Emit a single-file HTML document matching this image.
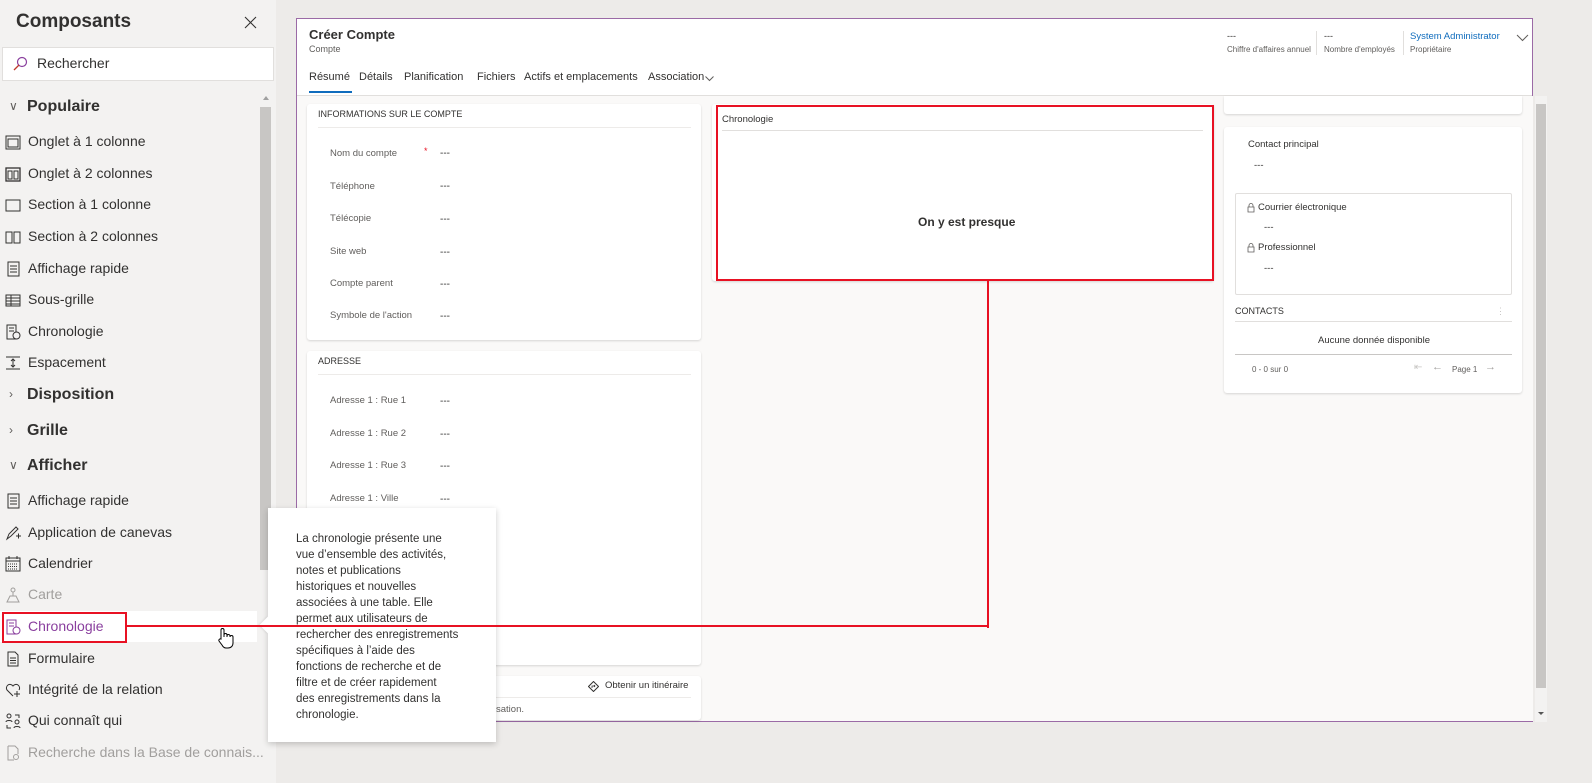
<!DOCTYPE html>
<html><head><meta charset="utf-8">
<style>
*{box-sizing:border-box;margin:0;padding:0}
body{width:1592px;height:783px;overflow:hidden;background:#edebe9;font-family:"Segoe UI","Liberation Sans",sans-serif;color:#323130;position:relative}
.abs{position:absolute;white-space:nowrap}
#side{position:absolute;left:0;top:0;width:276px;height:783px;background:#f3f2f1}
.it{position:absolute;left:28px;font-size:14px;color:#323130;line-height:18px}
.ic{position:absolute;left:5px;width:16px;height:16px}
.hd{position:absolute;left:27px;font-size:16px;font-weight:600;color:#323130;line-height:20px}
.chev{position:absolute;left:9px;font-size:12px;color:#605e5c}
.card{position:absolute;background:#fff;border-radius:3px;box-shadow:0 1px 2px rgba(0,0,0,.15)}
.lbl{position:absolute;font-size:9.5px;color:#605e5c}
.val{position:absolute;font-size:10px;color:#323130}
.tab{position:absolute;top:71px;font-size:11px;color:#323130}
</style></head><body>
<div id="side">
  <div class="abs" style="left:16px;top:11px;font-size:19px;font-weight:600;color:#323130">Composants</div>
  <svg class="abs" style="left:244px;top:16px" width="13" height="13"><path d="M1 1L12 12M12 1L1 12" stroke="#323130" stroke-width="1.1"/></svg>
  <div class="abs" style="left:2px;top:47px;width:272px;height:34px;background:#fff;border:1px solid #e1dfdd"></div>
  <svg class="abs" style="left:12px;top:56px" width="16" height="16"><circle cx="10" cy="6" r="4.5" fill="none" stroke="#8a3f9e" stroke-width="1.2"/><path d="M7 9L2 14" stroke="#c0392b" stroke-width="1.3"/></svg>
  <div class="abs" style="left:37px;top:55px;font-size:14px;color:#323130">Rechercher</div>
  <div class="abs" style="left:259px;top:93px;width:12px;height:480px;background:#f3f2f1"></div>
  <div class="abs" style="left:263px;top:96px;width:0;height:0;border-left:3px solid transparent;border-right:3px solid transparent;border-bottom:4px solid #a0a0a0"></div>
  <div class="abs" style="left:260px;top:107px;width:11px;height:463px;background:#c8c6c4"></div>

  <div class="chev abs" style="top:99px">&#x2228;</div><div class="hd" style="top:97px">Populaire</div>
  <svg class="ic" style="top:134px"><rect x="1" y="2" width="14" height="13" fill="none" stroke="#323130"/><rect x="3" y="5" width="10" height="8" fill="none" stroke="#323130"/></svg><div class="it" style="top:132px">Onglet à 1 colonne</div>
  <svg class="ic" style="top:166px"><rect x="1" y="2" width="14" height="13" fill="none" stroke="#323130" stroke-width="1.3"/><rect x="3" y="5" width="4" height="8" fill="none" stroke="#323130"/><rect x="9" y="5" width="4" height="8" fill="none" stroke="#323130"/></svg><div class="it" style="top:164px">Onglet à 2 colonnes</div>
  <svg class="ic" style="top:197px"><rect x="1" y="3" width="14" height="11" fill="none" stroke="#323130"/></svg><div class="it" style="top:195px">Section à 1 colonne</div>
  <svg class="ic" style="top:229px"><rect x="1" y="3" width="6" height="11" fill="none" stroke="#323130"/><rect x="9" y="3" width="6" height="11" fill="none" stroke="#323130"/></svg><div class="it" style="top:227px">Section à 2 colonnes</div>
  <svg class="ic" style="top:261px"><rect x="3" y="1" width="11" height="14" fill="none" stroke="#323130"/><path d="M5 5h7M5 8h7M5 11h7" stroke="#323130"/></svg><div class="it" style="top:259px">Affichage rapide</div>
  <svg class="ic" style="top:292px"><rect x="1" y="3" width="14" height="11" fill="none" stroke="#323130"/><path d="M1 6h14M1 9h14M1 12h14M6 3v11" stroke="#323130"/></svg><div class="it" style="top:290px">Sous-grille</div>
  <svg class="ic" style="top:324px"><rect x="2" y="1" width="9" height="14" fill="none" stroke="#323130"/><path d="M4 4h5M4 7h5" stroke="#323130"/><circle cx="11.5" cy="11.5" r="3.5" fill="#f3f2f1" stroke="#323130"/></svg><div class="it" style="top:322px">Chronologie</div>
  <svg class="ic" style="top:355px"><path d="M1 2h14M1 14h14M8 4v8M6 6l2-2 2 2M6 10l2 2 2-2" stroke="#323130" fill="none"/></svg><div class="it" style="top:353px">Espacement</div>

  <div class="chev abs" style="top:387px">&#x203A;</div><div class="hd" style="top:385px">Disposition</div>
  <div class="chev abs" style="top:423px">&#x203A;</div><div class="hd" style="top:421px">Grille</div>
  <div class="chev abs" style="top:458px">&#x2228;</div><div class="hd" style="top:456px">Afficher</div>

  <svg class="ic" style="top:493px"><rect x="3" y="1" width="11" height="14" fill="none" stroke="#323130"/><path d="M5 5h7M5 8h7M5 11h7" stroke="#323130"/></svg><div class="it" style="top:491px">Affichage rapide</div>
  <svg class="ic" style="top:525px"><path d="M2 14l2-5 7-7 2 2-7 7z M11 11h5M13.5 8.5v5" stroke="#323130" fill="none"/></svg><div class="it" style="top:523px">Application de canevas</div>
  <svg class="ic" style="top:556px"><rect x="1" y="2" width="14" height="13" fill="none" stroke="#323130"/><path d="M1 5h14M4 0v3M12 0v3" stroke="#323130"/><path d="M3 8h10M3 10.5h10M3 13h10" stroke="#323130" stroke-dasharray="1 1"/></svg><div class="it" style="top:554px">Calendrier</div>
  <svg class="ic" style="top:587px"><circle cx="8" cy="3" r="2" fill="none" stroke="#a19f9d"/><path d="M8 5v4M2 15l3-6h6l3 6z" stroke="#a19f9d" fill="none"/></svg><div class="it" style="top:585px;color:#a19f9d">Carte</div>
  <div class="abs" style="left:0;top:611px;width:257px;height:31px;background:#fff"></div>
  <svg class="ic" style="top:619px"><rect x="2" y="1" width="9" height="14" fill="none" stroke="#8a3f9e"/><path d="M4 4h5M4 7h5" stroke="#8a3f9e"/><circle cx="11.5" cy="11.5" r="3.5" fill="#fff" stroke="#8a3f9e"/></svg><div class="it" style="top:617px;color:#8a3f9e">Chronologie</div>
  <div class="abs" style="left:2px;top:612px;width:125px;height:31px;border:2px solid #e81123"></div>
  <svg class="ic" style="top:651px"><path d="M3 1h7l3 3v11H3z" fill="none" stroke="#323130"/><path d="M5 7h6M5 9.5h6M5 12h6" stroke="#323130"/></svg><div class="it" style="top:649px">Formulaire</div>
  <svg class="ic" style="top:682px"><path d="M8 14L2 8a3.5 3.5 0 016-4 3.5 3.5 0 016 4" fill="none" stroke="#323130"/><path d="M12 9v6M9 12h6" stroke="#323130"/></svg><div class="it" style="top:680px">Intégrité de la relation</div>
  <svg class="ic" style="top:713px"><circle cx="4" cy="3" r="2" fill="none" stroke="#323130"/><circle cx="12" cy="9" r="2" fill="none" stroke="#323130"/><path d="M1 9c0-2 6-2 6 0M9 15c0-2 6-2 6 0M10 2h4v3M2 12v3h4" stroke="#323130" fill="none"/></svg><div class="it" style="top:711px">Qui connaît qui</div>
  <svg class="ic" style="top:745px"><path d="M3 1h7l3 3v5M3 1v14h6" fill="none" stroke="#a19f9d"/><circle cx="11" cy="12" r="2.5" fill="none" stroke="#a19f9d"/></svg><div class="it" style="top:743px;color:#a19f9d">Recherche dans la Base de connais...</div>
</div>

<!-- form frame -->
<div class="abs" style="left:296px;top:18px;width:1237px;height:704px;border:1px solid #9b6aa6;border-right:none;background:#faf9f8"></div>
<div class="abs" style="left:297px;top:19px;width:1235px;height:77px;background:#fff;border-bottom:1px solid #e1dfdd"></div>
<div class="abs" style="left:1532px;top:18px;width:1px;height:78px;background:#9b6aa6"></div>
<div class="abs" style="left:1535px;top:96px;width:12px;height:626px;background:#f3f2f1"></div>
<div class="abs" style="left:1536px;top:104px;width:10px;height:584px;background:#c8c6c4"></div>
<div class="abs" style="left:1538px;top:712px;width:0;height:0;border-left:3px solid transparent;border-right:3px solid transparent;border-top:3px solid #555"></div>

<div class="abs" style="left:309px;top:27px;font-size:13px;font-weight:600">Créer Compte</div>
<div class="abs" style="left:309px;top:44px;font-size:9px;color:#605e5c">Compte</div>
<div class="tab" style="left:309px">Résumé</div>
<div class="abs" style="left:309px;top:91px;width:43px;height:2px;background:#0f6cbd"></div>
<div class="tab" style="left:359px">Détails</div>
<div class="tab" style="left:404px">Planification</div>
<div class="tab" style="left:477px">Fichiers</div>
<div class="tab" style="left:524px">Actifs et emplacements</div>
<div class="tab" style="left:648px">Association</div>
<svg class="abs" style="left:705px;top:76px" width="9" height="6"><path d="M0.5 0.5l4 4 4-4" fill="none" stroke="#605e5c"/></svg>

<div class="abs" style="left:1227px;top:31px;font-size:9px">---</div>
<div class="abs" style="left:1227px;top:45px;font-size:8px;color:#605e5c">Chiffre d'affaires annuel</div>
<div class="abs" style="left:1316px;top:31px;width:1px;height:24px;background:#e1dfdd"></div>
<div class="abs" style="left:1324px;top:31px;font-size:9px">---</div>
<div class="abs" style="left:1324px;top:45px;font-size:8px;color:#605e5c">Nombre d'employés</div>
<div class="abs" style="left:1403px;top:31px;width:1px;height:24px;background:#e1dfdd"></div>
<div class="abs" style="left:1410px;top:31px;font-size:9.5px;color:#0f6cbd">System Administrator</div>
<div class="abs" style="left:1410px;top:45px;font-size:8px;color:#605e5c">Propriétaire</div>
<svg class="abs" style="left:1516px;top:34px" width="13" height="8"><path d="M1 1l5.5 5.5L12 1" fill="none" stroke="#605e5c"/></svg>

<!-- card 1 -->
<div class="card" style="left:307px;top:104px;width:394px;height:236px"></div>
<div class="abs" style="left:318px;top:109px;font-size:9px;color:#323130">INFORMATIONS SUR LE COMPTE</div>
<div class="abs" style="left:318px;top:127px;width:373px;height:1px;background:#edebe9"></div>
<div class="lbl" style="left:330px;top:148px">Nom du compte</div><div class="abs" style="left:424px;top:146px;font-size:9px;color:#e81123">*</div><div class="val" style="left:440px;top:148px">---</div>
<div class="lbl" style="left:330px;top:181px">Téléphone</div><div class="val" style="left:440px;top:181px">---</div>
<div class="lbl" style="left:330px;top:213px">Télécopie</div><div class="val" style="left:440px;top:214px">---</div>
<div class="lbl" style="left:330px;top:246px">Site web</div><div class="val" style="left:440px;top:247px">---</div>
<div class="lbl" style="left:330px;top:278px">Compte parent</div><div class="val" style="left:440px;top:279px">---</div>
<div class="lbl" style="left:330px;top:310px">Symbole de l'action</div><div class="val" style="left:440px;top:311px">---</div>

<!-- card 2 -->
<div class="card" style="left:307px;top:351px;width:394px;height:314px"></div>
<div class="abs" style="left:318px;top:356px;font-size:9px">ADRESSE</div>
<div class="abs" style="left:318px;top:374px;width:373px;height:1px;background:#edebe9"></div>
<div class="lbl" style="left:330px;top:395px">Adresse 1 : Rue 1</div><div class="val" style="left:440px;top:396px">---</div>
<div class="lbl" style="left:330px;top:428px">Adresse 1 : Rue 2</div><div class="val" style="left:440px;top:429px">---</div>
<div class="lbl" style="left:330px;top:460px">Adresse 1 : Rue 3</div><div class="val" style="left:440px;top:461px">---</div>
<div class="lbl" style="left:330px;top:493px">Adresse 1 : Ville</div><div class="val" style="left:440px;top:494px">---</div>

<!-- card 3 -->
<div class="card" style="left:307px;top:676px;width:394px;height:44px"></div>
<svg class="abs" style="left:588px;top:681px" width="11" height="11"><path d="M5.5 0.5l5 5-5 5-5-5z" fill="none" stroke="#323130"/><path d="M4 7V5h3M6 4l1 1-1 1" fill="none" stroke="#323130" stroke-width=".8"/></svg>
<div class="abs" style="left:605px;top:680px;font-size:9.5px">Obtenir un itinéraire</div>
<div class="abs" style="left:318px;top:697px;width:373px;height:1px;background:#edebe9"></div>
<div class="abs" style="left:496px;top:704px;font-size:9.5px;color:#605e5c">sation.</div>

<!-- chronologie card -->
<div class="card" style="left:712px;top:104px;width:502px;height:177px"></div>
<div class="abs" style="left:716px;top:105px;width:498px;height:176px;border:2px solid #e81123"></div>
<div class="abs" style="left:722px;top:114px;font-size:9.5px">Chronologie</div>
<div class="abs" style="left:722px;top:130px;width:481px;height:1px;background:#e1dfdd"></div>
<div class="abs" style="left:918px;top:215px;font-size:12px;font-weight:600">On y est presque</div>

<!-- right column -->
<div class="card" style="left:1224px;top:96px;width:298px;height:18px;border-radius:0 0 3px 3px"></div>
<div class="card" style="left:1224px;top:127px;width:298px;height:266px"></div>
<div class="abs" style="left:1248px;top:139px;font-size:9.5px">Contact principal</div>
<div class="abs" style="left:1254px;top:160px;font-size:9.5px">---</div>
<div class="abs" style="left:1235px;top:193px;width:277px;height:102px;border:1px solid #e1dfdd;border-radius:2px"></div>
<svg class="abs" style="left:1247px;top:203px" width="8" height="10"><path d="M2 4V2.5a2 2 0 014 0V4M1 4h6v5H1z" fill="none" stroke="#605e5c" stroke-width=".8"/></svg>
<div class="abs" style="left:1258px;top:202px;font-size:9.5px">Courrier électronique</div>
<div class="abs" style="left:1264px;top:222px;font-size:9.5px">---</div>
<svg class="abs" style="left:1247px;top:243px" width="8" height="10"><path d="M2 4V2.5a2 2 0 014 0V4M1 4h6v5H1z" fill="none" stroke="#605e5c" stroke-width=".8"/></svg>
<div class="abs" style="left:1258px;top:242px;font-size:9.5px">Professionnel</div>
<div class="abs" style="left:1264px;top:263px;font-size:9.5px">---</div>
<div class="abs" style="left:1235px;top:306px;font-size:9px">CONTACTS</div>
<div class="abs" style="left:1496px;top:306px;font-size:9px;color:#c8c6c4">&#x22EE;</div>
<div class="abs" style="left:1235px;top:321px;width:277px;height:1px;background:#e1dfdd"></div>
<div class="abs" style="left:1318px;top:335px;font-size:9.5px">Aucune donnée disponible</div>
<div class="abs" style="left:1235px;top:354px;width:277px;height:1px;background:#c8c6c4"></div>
<div class="abs" style="left:1252px;top:365px;font-size:8px;color:#605e5c">0 - 0 sur 0</div>
<div class="abs" style="left:1414px;top:362px;font-size:10px;color:#c8c6c4">&#x21E4;</div>
<div class="abs" style="left:1432px;top:361px;font-size:11px;color:#a19f9d">&#x2190;</div>
<div class="abs" style="left:1452px;top:365px;font-size:8px;color:#605e5c">Page 1</div>
<div class="abs" style="left:1485px;top:361px;font-size:11px;color:#a19f9d">&#x2192;</div>

<!-- tooltip -->
<div class="abs" style="left:268px;top:508px;width:228px;height:234px;background:#fff;box-shadow:0 2px 6px rgba(0,0,0,.2)"></div>
<div class="abs" style="left:262px;top:619px;width:12px;height:12px;background:#fff;transform:rotate(45deg);box-shadow:-1px 1px 2px rgba(0,0,0,.08)"></div>
<div class="abs" style="left:268px;top:612px;width:10px;height:26px;background:#fff"></div>
<div class="abs" style="left:296px;top:531px;font-size:11.5px;line-height:16px;color:#323130;white-space:normal;width:200px">La chronologie présente une<br>vue d’ensemble des activités,<br>notes et publications<br>historiques et nouvelles<br>associées à une table. Elle<br>permet aux utilisateurs de<br>rechercher des enregistrements<br>spécifiques à l’aide des<br>fonctions de recherche et de<br>filtre et de créer rapidement<br>des enregistrements dans la<br>chronologie.</div>

<!-- connector (on top) -->
<div class="abs" style="left:987px;top:279px;width:2px;height:349px;background:#e81123"></div>
<div class="abs" style="left:126px;top:625px;width:863px;height:2px;background:#e81123"></div>

<!-- cursor -->
<svg class="abs" style="left:216px;top:627px" width="18" height="24"><path d="M5 12V3a1.5 1.5 0 013 0v7V8a1.5 1.5 0 013 0v2-1a1.5 1.5 0 013 0v1a1.5 1.5 0 013 0v6c0 3-2 5-5 5h-2c-2 0-3-1-4-3l-3-4a1.5 1.5 0 012-2z" fill="#fff" stroke="#000" stroke-width="1"/></svg>
</body></html>
